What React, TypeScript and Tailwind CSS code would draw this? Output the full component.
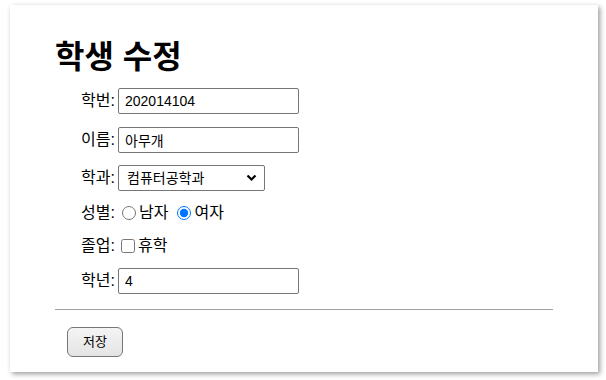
import { useState } from 'react';

const labelCls = "w-[60px] shrink-0 text-right text-[16px] text-black";
const inputCls =
  "ml-[3px] h-[26px] rounded-[2px] border border-[#767676] bg-white px-[6px] text-[14px] text-black outline-none";

export default function App() {
  const [gender, setGender] = useState("f");
  const [leave, setLeave] = useState(false);

  return (
    <div
      className="min-h-[380px] w-[606px] bg-white pl-[10px] pt-[5px]"
      style={{ fontFamily: '"Liberation Sans", "Noto Sans CJK KR", sans-serif' }}
    >
      <div className="flex h-[367px] w-[588px] flex-col bg-white px-[45px] pt-[32px] shadow-[2px_2px_5px_rgba(0,0,0,0.4)]">
        <h1 className="text-[32px] font-bold leading-[40px] text-black">학생 수정</h1>

        <div className="mt-[11px] flex flex-col gap-[12px]">
          {/* 학번 */}
          <div className="flex h-[26px] items-center">
            <span className={labelCls}>학번:</span>
            <input className={`${inputCls} w-[181px]`} defaultValue="202014104" />
          </div>

          {/* 이름 */}
          <div className="mt-[1px] flex h-[26px] items-center">
            <span className={labelCls}>이름:</span>
            <input className={`${inputCls} w-[181px]`} defaultValue="아무개" />
          </div>

          {/* 학과 */}
          <div className="flex h-[26px] items-center">
            <span className={labelCls}>학과:</span>
            <div className="relative ml-[3px] flex h-[26px] w-[147px] items-center rounded-[2px] border border-[#767676] bg-white pl-[8px] text-[14px] text-black">
              컴퓨터공학과
              <svg
                className="absolute right-[7px] top-[8px]"
                width="11"
                height="8"
                viewBox="0 0 11 8"
              >
                <path d="M1.5 1.5 L5.5 5.5 L9.5 1.5" fill="none" stroke="#000" strokeWidth="2.2" />
              </svg>
            </div>
          </div>

          {/* 성별 */}
          <div className="mt-[-2px] flex h-[24px] items-center text-[16px]">
            <span className={labelCls}>성별:</span>
            <label className="ml-[3px] flex items-center">
              <input
                type="radio"
                name="gender"
                className="m-0 ml-[4px] mr-[3px] h-[14px] w-[14px] accent-[#0075ff]"
                checked={gender === "m"}
                onChange={() => setGender("m")}
              />
              남자
            </label>
            <label className="ml-[9px] flex items-center">
              <input
                type="radio"
                name="gender"
                className="m-0 mr-[3px] h-[14px] w-[14px] accent-[#0075ff]"
                checked={gender === "f"}
                onChange={() => setGender("f")}
              />
              여자
            </label>
          </div>

          {/* 졸업 */}
          <div className="mt-[-3px] flex h-[24px] items-center text-[16px]">
            <span className={labelCls}>졸업:</span>
            <label className="ml-[3px] flex items-center">
              <input
                type="checkbox"
                className="m-0 ml-[3px] mr-[3px] h-[14px] w-[14px]"
                checked={leave}
                onChange={() => setLeave(!leave)}
              />
              휴학
            </label>
          </div>

          {/* 학년 */}
          <div className="mt-[-2px] flex h-[26px] items-center">
            <span className={labelCls}>학년:</span>
            <input className={`${inputCls} w-[181px]`} defaultValue="4" />
          </div>
        </div>

        <hr className="mt-[15px] border-t border-[#a0a0a0]" />

        <div className="pl-[12px] pt-[17px]">
          <button className="h-[30px] w-[56px] rounded-[6px] border border-[#767676] bg-gradient-to-b from-[#f4f4f4] to-[#e4e4e4] text-[13px] text-black">
            저장
          </button>
        </div>
      </div>
    </div>
  );
}
